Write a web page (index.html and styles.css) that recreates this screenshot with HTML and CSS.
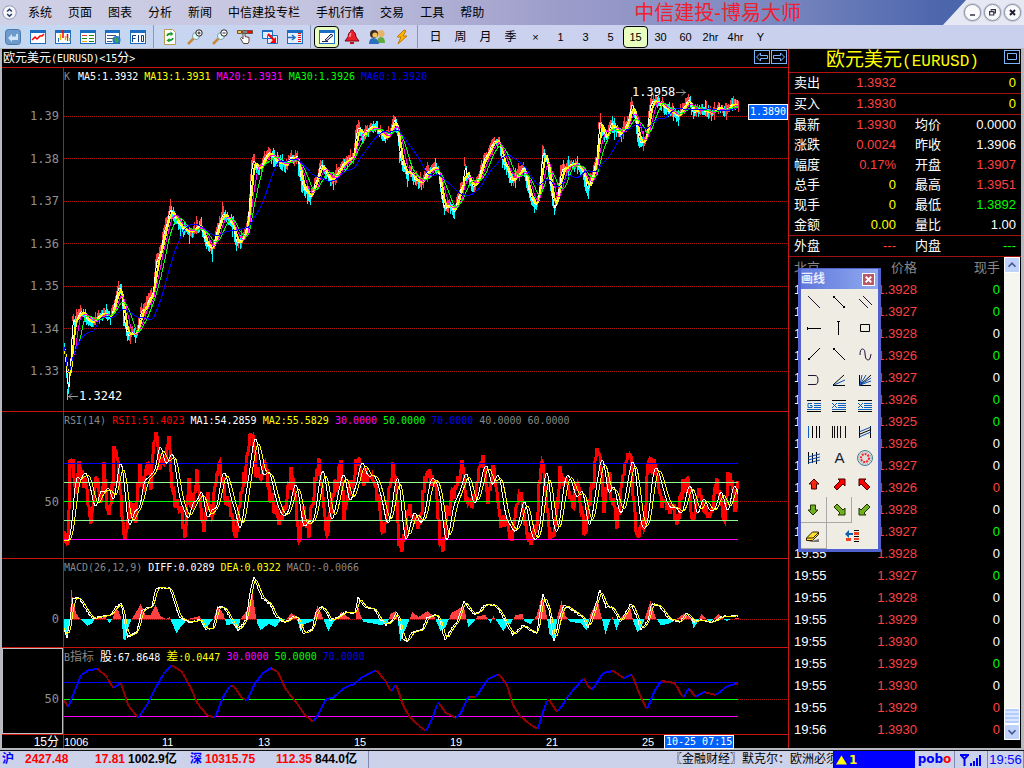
FILE: index.html
```html
<!DOCTYPE html>
<html lang="zh-CN">
<head>
    <meta charset="UTF-8">
    <title>中信建投-博易大师</title>
    <link rel="stylesheet" href="styles.css">
    <script src="charts.js" defer></script>
</head>
<body>
<header class="titlebar">
    <svg class="logo" viewBox="0 0 16 16"><circle cx="8" cy="8" r="7.2" fill="#f4f4fa" stroke="#8a94b0"/><path d="M5.500 7L8 4.500 10.500 7M5.500 9.500L8 12l2.500-2.500" fill="none" stroke="#223a66" stroke-width="1.500"/></svg>
    <nav class="menu">
        <a href="#">系统</a><a href="#">页面</a><a href="#">图表</a><a href="#">分析</a><a href="#">新闻</a><a href="#">中信建投专栏</a><a href="#">手机行情</a><a href="#">交易</a><a href="#">工具</a><a href="#">帮助</a>
    </nav>
    <h1>中信建投-博易大师</h1>
    <div class="win-btns">
        <button aria-label="最小化"><svg viewBox="0 0 18 18"><path d="M6 12h6" stroke="#334" stroke-width="2"/></svg></button>
        <button aria-label="还原"><svg viewBox="0 0 18 18"><path d="M7.500 7V5.500h5v4H11M5.500 8h5v4h-5z" fill="none" stroke="#334" stroke-width="1.400"/></svg></button>
        <button aria-label="关闭"><svg viewBox="0 0 18 18"><path d="M6 6l6 6M12 6l-6 6" stroke="#223" stroke-width="2.400"/></svg></button>
    </div>
</header>

<div class="toolbar">
    <div class="group">
        <button aria-label="返回"><svg viewBox="0 0 16 16"><rect x=".5" y=".5" width="15" height="15" rx="3" fill="#6d9ccc" stroke="#4a78ac"/><path d="M3 9l4-4v2.500h4V5h2v6H7v2z" fill="#cfe4f8"/></svg></button>
        <button aria-label="分时"><svg viewBox="0 0 16 16"><rect x=".5" y="1.500" width="15" height="13" fill="#fff" stroke="#1a6fc4"/><path d="M0 2.500h16" stroke="#1a6fc4" stroke-width="3"/><path d="M2 11l3-3 2 2 3-3h2l2-2" fill="none" stroke="red" stroke-width="1.500"/></svg></button>
        <button aria-label="K线"><svg viewBox="0 0 16 16"><rect x=".5" y="1.500" width="15" height="13" fill="#fff" stroke="#1a6fc4"/><path d="M0 2.500h16" stroke="#1a6fc4" stroke-width="3"/><path d="M3.500 9v4M12.500 8v4" stroke="#1a6fc4"/><path d="M5.500 5v6M10.500 7v4M14.500 9v3" stroke="#e8b000" stroke-width="1.500"/><path d="M8 1v8M12.500 5v4" stroke="red" stroke-width="1.500"/></svg></button>
        <button aria-label="报价"><svg viewBox="0 0 16 16"><rect x=".5" y="1.500" width="15" height="13" fill="#fff" stroke="#1a6fc4"/><path d="M0 2.500h16" stroke="#1a6fc4" stroke-width="3"/><path d="M2 6.500h5" stroke="#e33"/><path d="M2 9.500h5M9 6.500h5M9 9.500h5M9 12.500h5" stroke="#281"/><path d="M2 12.500h5" stroke="#e8b000"/></svg></button>
        <button aria-label="新闻"><svg viewBox="0 0 16 16"><rect x=".5" y="1.500" width="14" height="13" fill="#fff" stroke="#1a6fc4"/><path d="M0 2.500h15" stroke="#1a6fc4" stroke-width="3"/><path d="M2 6.500h9M2 9.500h6M2 12.500h5" stroke="#457"/><circle cx="11.500" cy="11" r="4" fill="#1c78c8"/><path d="M9 10q2-3 4 0t-2 4z" fill="#3fa54a"/></svg></button>
        <button aria-label="F10"><svg viewBox="0 0 16 16"><rect x=".5" y="1.500" width="15" height="13" fill="#fff" stroke="#1a6fc4"/><path d="M0 2.500h16" stroke="#1a6fc4" stroke-width="3"/><path d="M2.500 13V6.500H6M2.500 9.500h3M8.500 6v7M11.500 6.500h2v6h-2z" fill="none" stroke="#123b80"/></svg></button>
    </div>
    <div class="group">
        <button aria-label="刷新"><svg viewBox="0 0 16 16"><path d="M2.500.5h8l3 3v12h-11z" fill="#fff" stroke="#b99a4a"/><path d="M5 7q1-3 4-2M11 9q-1 3-4 2" fill="none" stroke="#1a9a2a" stroke-width="1.800"/><path d="M8.500 2.500l3 2.500-3 2zM7.500 9l-3 2.500 3 2z" fill="#1a9a2a"/></svg></button>
        <button aria-label="放大"><svg viewBox="0 0 16 16"><path d="M1 15l6-6" stroke="#c88a3a" stroke-width="2.500"/><circle cx="9" cy="7" r="3.500" fill="#dff" stroke="#89a"/><circle cx="12" cy="4" r="3.200" fill="#fff" stroke="#222"/><path d="M10.500 4h3M12 2.500v3" stroke="#222"/></svg></button>
        <button aria-label="缩小"><svg viewBox="0 0 16 16"><path d="M1 15l6-6" stroke="#c88a3a" stroke-width="2.500"/><circle cx="9" cy="7" r="3.500" fill="#dff" stroke="#89a"/><circle cx="12" cy="4" r="3.200" fill="#fff" stroke="#222"/><path d="M10.500 4h3" stroke="#222"/></svg></button>
        <button aria-label="选择"><svg viewBox="0 0 16 16"><path d="M.5 1.500h4v3h-4z" fill="#ffc040" stroke="#654"/><path d="M5.500 1.500h5v3h-5z" fill="#888" stroke="#654"/><path d="M10.500 1.500h5v3h-5z" fill="red" stroke="#654"/><path d="M6.500 14.500l-3-5 1-1 1.500 1.500V4.500q1-1 2 0v3l4 1v4l-1 2z" fill="#fff" stroke="#543"/></svg></button>
        <button aria-label="叠加"><svg viewBox="0 0 16 16"><path d="M.5 1.500h10v8H.5zM5.500 6.500h10v8h-10z" fill="#e4eefc" stroke="#1a6fc4"/><path d="M.5 2h10" stroke="#1a6fc4" stroke-width="2"/><path d="M6 5l6 6" stroke="red" stroke-width="2"/><path d="M14 8v6H8z" fill="red"/></svg></button>
        <button aria-label="移动"><svg viewBox="0 0 16 16"><rect x=".5" y="1.500" width="15" height="13" fill="#e4eefc" stroke="#1a6fc4"/><path d="M0 2.500h16" stroke="#1a6fc4" stroke-width="3"/><path d="M1 8.500h6M5 6l3 2.500L5 11" fill="none" stroke="#1a6fc4" stroke-width="1.500"/><path d="M12.500 4v10" stroke="red" stroke-width="3" stroke-dasharray="1 1"/></svg></button>
    </div>
    <div class="group">
        <button class="on" aria-label="画线"><svg viewBox="0 0 16 16"><rect x=".5" y="1.500" width="15" height="13" fill="#fff" stroke="#1a6fc4"/><path d="M0 2.500h16" stroke="#1a6fc4" stroke-width="3"/><path d="M3 12.500h6M6 11l6-6 2 1.500-6 5z" fill="#dde" stroke="#225"/></svg></button>
        <button aria-label="预警"><svg viewBox="0 0 16 16"><path d="M8 1q1.500 0 1.500 1.500Q12 4 12 8l3 4H1l3-4q0-4 2.500-5.500Q6.500 1 8 1z" fill="#e8202a" stroke="#801"/><path d="M5.500 5q1-2 2-1l-1 4h-2z" fill="#ff9090"/><path d="M6 13h4v2H6z" fill="#b01018"/></svg></button>
        <button aria-label="用户"><svg viewBox="0 0 16 16"><path d="M8 14q0-6 4-6t4 6z" fill="#5dab3c"/><circle cx="12" cy="4.500" r="3.500" fill="#e8b468"/><path d="M0 15q0-6 4.500-6T10 15z" fill="#2a6fc0"/><circle cx="5" cy="5" r="4" fill="#3a2a1a"/><circle cx="6" cy="6" r="2.600" fill="#f0c060"/></svg></button>
        <button aria-label="闪电"><svg viewBox="0 0 16 16"><path d="M10 1L3 8h4l-3 7 9-8H9l3-5z" fill="#ffb400" stroke="#c07800"/></svg></button>
    </div>
    <div class="group periods">
        <button class="cjk">日</button><button class="cjk">周</button><button class="cjk">月</button><button class="cjk">季</button><button>×</button><button>1</button><button>3</button><button>5</button><button class="on">15</button><button>30</button><button>60</button><button>2hr</button><button>4hr</button><button>Y</button>
    </div>
</div>

<main class="main">
    <section class="charts">
        <div class="chart-head">
            <h2>欧元美元<span class="mono">(EURUSD)&lt;15</span>分<span class="mono">&gt;</span></h2>
            <button aria-label="上一个"><svg viewBox="0 0 14 12"><path d="M1.500 6l4-4v2.500h7v3h-7V10z" fill="none" stroke="#7ab4ff"/></svg></button>
            <button aria-label="下一个"><svg viewBox="0 0 14 12"><path d="M12.500 6l-4-4v2.500h-7v3h7V10z" fill="none" stroke="#7ab4ff"/></svg></button>
        </div>
        <div class="pane">
            <div class="axis axis-price"><span>1.39</span><span>1.38</span><span>1.37</span><span>1.36</span><span>1.35</span><span>1.34</span><span>1.33</span></div>
            <div class="plot">
                <svg id="price" viewBox="64 68 724 343" preserveAspectRatio="none"></svg>
                <p class="legend"><span class="gray">K</span><span class="white gap">MA5:1.3932</span><span class="yellow">MA13:1.3931</span><span class="magenta">MA20:1.3931</span><span class="lime">MA30:1.3926</span><span class="blue">MA60:1.3920</span></p>
                <span class="mark high">1.3958<svg viewBox="0 0 12 8"><path d="M1 4.500h10M7 1.500l3 3-3 3" fill="none" stroke="#999"/></svg></span>
                <span class="mark low"><svg viewBox="0 0 12 8"><path d="M1 4.500h10M5 1.500l-3 3 3 3" fill="none" stroke="#999"/></svg>1.3242</span>
                <span class="price-tag">1.3890</span>
            </div>
        </div>
        <div class="pane">
            <div class="axis axis-rsi"><span>50</span></div>
            <div class="plot">
                <svg id="rsi" viewBox="64 412 724 146" preserveAspectRatio="none"></svg>
                <p class="legend"><span class="gray">RSI(14)</span><span class="red">RSI1:51.4023</span><span class="white">MA1:54.2859</span><span class="yellow">MA2:55.5829</span><span class="magenta">30.0000</span><span class="lime">50.0000</span><span class="blue">70.0000</span><span class="gray">40.0000</span><span class="gray">60.0000</span></p>
            </div>
        </div>
        <div class="pane">
            <div class="axis axis-macd"><span>0</span></div>
            <div class="plot">
                <svg id="macd" viewBox="64 559 724 88" preserveAspectRatio="none"></svg>
                <p class="legend"><span class="gray">MACD(26,12,9)</span><span class="white">DIFF:0.0289</span><span class="yellow">DEA:0.0322</span><span class="gray">MACD:-0.0066</span></p>
            </div>
        </div>
        <div class="pane">
            <div class="axis axis-b"><span>50</span></div>
            <div class="plot">
                <svg id="bline" viewBox="64 648 724 86" preserveAspectRatio="none"></svg>
                <p class="legend"><span class="gray">B<b>指标</b></span><span class="white"><b>股</b>:67.8648</span><span class="yellow"><b>差</b>:0.0447</span><span class="magenta">30.0000</span><span class="lime">50.0000</span><span class="blue">70.0000</span></p>
            </div>
        </div>
        <div class="pane time-row">
            <div class="axis">15分</div>
            <div class="times"><span>1006</span><span>11</span><span>13</span><span>15</span><span>19</span><span>21</span><span>25</span><strong class="time-tag">10-25 07:15</strong></div>
        </div>
    </section>

    <aside class="side">
        <div class="side-head">
            <h2>欧元美元<span>(EURUSD)</span></h2>
            <button aria-label="最大化"><svg viewBox="0 0 14 12"><path d="M2.500 2.500h9v6h-9z" fill="none" stroke="#7ab4ff"/></svg></button>
        </div>
        <table class="quote">
            <tr class="line"><th>卖出</th><td class="up">1.3932</td><th></th><td class="yellow">0</td></tr>
            <tr class="line"><th>买入</th><td class="up">1.3930</td><th></th><td class="yellow">0</td></tr>
            <tr><th>最新</th><td class="up">1.3930</td><th>均价</th><td>0.0000</td></tr>
            <tr><th>涨跌</th><td class="up">0.0024</td><th>昨收</th><td>1.3906</td></tr>
            <tr><th>幅度</th><td class="up">0.17%</td><th>开盘</th><td class="up">1.3907</td></tr>
            <tr><th>总手</th><td class="yellow">0</td><th>最高</th><td class="up">1.3951</td></tr>
            <tr><th>现手</th><td class="yellow">0</td><th>最低</th><td class="lime">1.3892</td></tr>
            <tr class="line"><th>金额</th><td class="yellow">0.00</td><th>量比</th><td>1.00</td></tr>
            <tr class="line"><th>外盘</th><td class="up">---</td><th>内盘</th><td class="lime">---</td></tr>
        </table>
        <div class="ticks-wrap">
            <table class="ticks">
                <thead><tr><th>北京</th><th>价格</th><th>现手</th></tr></thead>
                <tbody>
                <tr><td>19:55</td><td>1.3928</td><td class="lime">0</td></tr>
                <tr><td>19:55</td><td>1.3927</td><td class="lime">0</td></tr>
                <tr><td>19:55</td><td>1.3928</td><td>0</td></tr>
                <tr><td>19:55</td><td>1.3926</td><td class="lime">0</td></tr>
                <tr><td>19:55</td><td>1.3927</td><td>0</td></tr>
                <tr><td>19:55</td><td>1.3926</td><td class="lime">0</td></tr>
                <tr><td>19:55</td><td>1.3925</td><td class="lime">0</td></tr>
                <tr><td>19:55</td><td>1.3926</td><td>0</td></tr>
                <tr><td>19:55</td><td>1.3927</td><td>0</td></tr>
                <tr><td>19:55</td><td>1.3926</td><td class="up">0</td></tr>
                <tr><td>19:55</td><td>1.3928</td><td>0</td></tr>
                <tr><td>19:55</td><td>1.3927</td><td class="lime">0</td></tr>
                <tr><td>19:55</td><td>1.3928</td><td>0</td></tr>
                <tr><td>19:55</td><td>1.3927</td><td class="lime">0</td></tr>
                <tr><td>19:55</td><td>1.3928</td><td>0</td></tr>
                <tr><td>19:55</td><td>1.3929</td><td>0</td></tr>
                <tr><td>19:55</td><td>1.3930</td><td>0</td></tr>
                <tr><td>19:55</td><td>1.3929</td><td class="lime">0</td></tr>
                <tr><td>19:55</td><td>1.3930</td><td>0</td></tr>
                <tr><td>19:55</td><td>1.3929</td><td class="up">0</td></tr>
                <tr><td>19:56</td><td>1.3930</td><td class="up">0</td></tr>
                </tbody>
            </table>
            <div class="scrollbar">
                <button aria-label="向上"><svg viewBox="0 0 16 16"><path d="M4 10l4-4 4 4" fill="none" stroke="#445a90" stroke-width="2"/></svg></button>
                <div class="track"><div class="thumb"></div></div>
                <button aria-label="向下"><svg viewBox="0 0 16 16"><path d="M4 6l4 4 4-4" fill="none" stroke="#445a90" stroke-width="2"/></svg></button>
            </div>
        </div>

        <div class="palette">
            <div class="palette-head">画线<button aria-label="关闭画线"><svg viewBox="0 0 12 12"><path d="M3 3l6 6M9 3L3 9" stroke="#fff" stroke-width="2"/></svg></button></div>
            <div class="tools">
                <button aria-label="直线"><svg viewBox="0 0 16 16"><path d="M2 2l12 12" stroke="#213"/></svg></button>
                <button aria-label="线段"><svg viewBox="0 0 16 16"><path d="M3 3l10 10" stroke="#000"/><path d="M2 2h2v2H2zM12 12h2v2h-2z"/></svg></button>
                <button aria-label="平行线"><svg viewBox="0 0 16 16"><path d="M2 5l9 9M6 2l9 9" stroke="#213"/></svg></button>
                <button aria-label="水平线"><svg viewBox="0 0 16 16"><path d="M1 8.500h14M1.500 7v3" stroke="#000"/></svg></button>
                <button aria-label="垂直线"><svg viewBox="0 0 16 16"><path d="M7.500 1v14M6 1.500h3" stroke="#000"/></svg></button>
                <button aria-label="矩形"><svg viewBox="0 0 16 16"><path d="M3.500 4.500h9v7h-9z" fill="none" stroke="#000"/></svg></button>
                <button aria-label="射线"><svg viewBox="0 0 16 16"><path d="M3 13L14 2" stroke="#000"/><path d="M2 12h2v2H2z"/></svg></button>
                <button aria-label="下射线"><svg viewBox="0 0 16 16"><path d="M3 3l11 11" stroke="#000"/><path d="M2 2h2v2H2z"/></svg></button>
                <button aria-label="波浪"><svg viewBox="0 0 16 16"><path d="M3 9q0-6 2.500-6T8 8t2.500 6T14 8" fill="none" stroke="#213"/></svg></button>
                <button aria-label="弧线"><svg viewBox="0 0 16 16"><path d="M2 3.500h7q3 0 3 4.500t-3 4.500H2" fill="none" stroke="#213"/></svg></button>
                <button aria-label="角度线"><svg viewBox="0 0 16 16"><path d="M2 13.500h12M2 13L13 3" stroke="#000"/><path d="M3 13l11-5" stroke="#0a50b0"/></svg></button>
                <button aria-label="甘氏线"><svg viewBox="0 0 16 16"><path d="M2.500 3v10.500H14M3 13L14 3" fill="none" stroke="#000"/><path d="M3 13L5 3M3 13L9 3M3 13l11-7M3 13l11-4" stroke="#0a50b0"/></svg></button>
                <button aria-label="黄金分割"><svg viewBox="0 0 16 16"><path d="M1 2.500h14M1 13.500h14" stroke="#000"/><path d="M8 5.500h7M8 7.500h7M8 9.500h7M1 11.500h14M6 5.500H2v4h4v-2H4" fill="none" stroke="#0a60c0"/></svg></button>
                <button aria-label="百分比"><svg viewBox="0 0 16 16"><path d="M1 2.500h14M1 13.500h14" stroke="#000"/><path d="M7 5.500h8M7 7.500h8M7 9.500h8M1 11.500h14M1 5l5 5M6 5l-5 5" stroke="#0a60c0"/></svg></button>
                <button aria-label="百分比二"><svg viewBox="0 0 16 16"><path d="M1 2.500h14M1 13.500h14" stroke="#000"/><path d="M7 5.500h8M7 7.500h8M7 9.500h8M1 11.500h14M1 5l5 5M6 5l-5 5" stroke="#0a60c0"/></svg></button>
                <button aria-label="周期线"><svg viewBox="0 0 16 16"><path d="M2.500 2v12" stroke="#0a60c0"/><path d="M6.500 2v12M10.500 2v12M13.500 2v12" stroke="#000"/></svg></button>
                <button aria-label="斐波那契"><svg viewBox="0 0 16 16"><path d="M1.500 2v12M3.500 2v12M6.500 2v12M9.500 2v12M14.500 2v12" stroke="#111"/></svg></button>
                <button aria-label="通道线"><svg viewBox="0 0 16 16"><path d="M2.500 2v12M13.500 2v12" stroke="#000"/><path d="M2 8l12-5M2 13l12-5" stroke="#0a50b0"/><path d="M2 10.500l12-5" stroke="#000"/></svg></button>
                <button aria-label="回归线"><svg viewBox="0 0 16 16"><path d="M2.500 2v12M6.500 3v10M10.500 2v12" stroke="#000"/><path d="M2 7l12-3M2 10l12-3M2 13l12-3" stroke="#0a50b0"/></svg></button>
                <button class="letter">A</button>
                <button aria-label="圆"><svg viewBox="0 0 16 16"><circle cx="8" cy="8" r="7.500" fill="#e4ecec" stroke="#447888"/><circle cx="8" cy="8" r="6" fill="none" stroke="#889" stroke-dasharray="1 1"/><circle cx="8" cy="8" r="4" fill="#ddd" stroke="#e22" stroke-width="2" stroke-dasharray="2 1"/></svg></button>
                <button aria-label="上箭头"><svg viewBox="0 0 16 16"><path d="M8 3l5 5h-2.500v5h-5V8H3z" fill="#f42a10" stroke="#400"/></svg></button>
                <button aria-label="右上箭头"><svg viewBox="0 0 16 16"><path d="M7 3h7v7l-2-2-6 6-3-3 6-6z" fill="red" stroke="#400"/></svg></button>
                <button aria-label="左上箭头"><svg viewBox="0 0 16 16"><path d="M9 3H2v7l2-2 6 6 3-3-6-6z" fill="red" stroke="#400"/></svg></button>
                <button class="boxed" aria-label="下箭头"><svg viewBox="0 0 16 16"><path d="M8 13l5-5h-2.500V3h-5v5H3z" fill="#70b020" stroke="#230"/></svg></button>
                <button class="boxed" aria-label="右下箭头"><svg viewBox="0 0 16 16"><path d="M7 13h7V6l-2 2-6-6-3 3 6 6z" fill="#70b020" stroke="#230"/></svg></button>
                <button aria-label="左下箭头"><svg viewBox="0 0 16 16"><path d="M9 13H2V6l2 2 6-6 3 3-6 6z" fill="#70b020" stroke="#230"/></svg></button>
                <button class="boxed" aria-label="橡皮"><svg viewBox="0 0 16 16"><path d="M3 14h11v-3z" fill="#777"/><path d="M1.500 10l6-6h6v2.500l-6 6h-6z" fill="#ffe030" stroke="#320"/><path d="M2 10h6l5-5" fill="none" stroke="#320"/></svg></button>
                <button class="wide" aria-label="画线管理"><svg viewBox="0 0 16 16"><path d="M1 6l4-4v3h4v2H5v3z" fill="#1060b0"/><path d="M2 10h5v3H2zM10 4h5v3h-5zM10 10h5v2h-5z" fill="#f04020"/><path d="M10 2.500h5M10 8.500h5M10 13.500h5" stroke="#000"/></svg></button>
            </div>
        </div>
    </aside>
</main>

<footer class="status">
    <div class="indices">
        <span class="idx">沪</span><span class="red">2427.48</span><span class="red">17.81</span><span>1002.9亿</span>
        <span class="idx">深</span><span class="red">10315.75</span><span class="red">112.35</span><span>844.0亿</span>
    </div>
    <p class="news">〖金融财经〗默克尔：欧洲必须</p>
    <div class="alert"><svg viewBox="0 0 12 10"><path d="M6 0l6 10H0z" fill="#ff0"/></svg>1</div>
    <div class="cell brand">pob<span class="red">o</span></div>
    <div class="cell signal"><svg viewBox="0 0 24 13"><path d="M1 2h9M2 2l3.500 4L9 2M5.500 6v7" fill="none" stroke="#00f" stroke-width="2"/><path d="M12 10v3M15 8v5M18 5v8M21 2v11" stroke="#00f" stroke-width="2"/></svg></div>
    <div class="cell clock">19:56</div>
</footer>
</body>
</html>
```
FILE: styles.css
```css
* {
    margin: 0;
    padding: 0;
    box-sizing: border-box;
}
body {
    height: 100vh;
    display: flex;
    flex-direction: column;
    overflow: hidden;
    background: #000;
    color: #fff;
    font: 12px/16px "Liberation Sans", "Noto Sans CJK SC", sans-serif;
}
button {
    border: 0;
    background: none;
    font: inherit;
    color: inherit;
}
svg { display: block; }
h1, h2, th, b { font-weight: normal; }
a { color: inherit; text-decoration: none; }

.red { color: #f00; }
.up { color: #ff4040; }
.yellow { color: #ff0; }
.magenta { color: #f0f; }
.lime { color: #0f0; }
.blue { color: #00f; }
.gray { color: #888; }
.white { color: #fff; }
.mono { font: 10px "DejaVu Sans Mono", monospace; }

/* title bar */
.titlebar {
    flex: 0 0 25px;
    display: flex;
    align-items: center;
    padding-left: 2px;
    background: linear-gradient(90deg, #d0d0e6 0%, #c4c4e0 30%, #9c9cca 55%, #7c88c0 75%, #4c66ac 92%);
    color: #000;
}
.logo { width: 15px; height: 15px; margin-right: 11px; }
.menu { display: flex; gap: 16px; }
.titlebar h1 {
    margin: 0 142px 0 auto;
    font-size: 20px;
    line-height: 24px;
    color: #f02030;
}
.win-btns {
    align-self: stretch;
    display: flex;
    align-items: center;
    justify-content: flex-end;
    gap: 3px;
    width: 81px;
    padding-right: 3px;
    background: #e6e8f4;
    clip-path: polygon(23px 0, 100% 0, 100% 100%, 0 100%);
}
.win-btns button {
    width: 17px;
    height: 17px;
    border: 1px solid #8890a8;
    border-radius: 50%;
    background: #fafafc;
    box-shadow: 0 0 0 1px #c8c8d0;
}
.win-btns svg { width: 15px; height: 15px; }

/* toolbar */
.toolbar {
    flex: 0 0 23px;
    display: flex;
    background: linear-gradient(90deg, #c4d8f2, #ccd2ee 40%, #c8d0ee);
    color: #000;
}
.group { display: flex; align-items: center; }
.group + .group {
    margin-left: 3px;
    padding-left: 3px;
    border-left: 1px solid #8898b8;
}
.group.periods { padding-left: 5px; }
.group button {
    width: 25px;
    height: 22px;
    display: flex;
    align-items: center;
    justify-content: center;
    border-radius: 4px;
    white-space: nowrap;
    font-size: 11px;
}
.group svg { width: 16px; height: 16px; }
.group .cjk { font-size: 12px; }
.group .on { border: 1px solid #000; background: #e8ffc0; }

/* main */
.main {
    flex: 1;
    min-height: 0;
    display: flex;
    border: solid #b8b8c0;
    border-width: 1px 3px 2px 2px;
}
.charts {
    flex: 1;
    min-width: 0;
    display: grid;
    grid-template-rows: 18px 344fr 147fr 89fr 87fr 14px;
}
.chart-head { display: flex; gap: 1px; padding-right: 1px; }
.chart-head h2 { flex: 1; padding-left: 1px; font-size: 12px; line-height: 18px; }
.chart-head button, .side-head button {
    width: 16px;
    height: 14px;
    margin-top: 1px;
    border: 1px solid #7ab4ff;
}
.pane {
    min-height: 0;
    display: flex;
    border-top: 1px solid #c81410;
}
.axis {
    flex: 0 0 62px;
    display: flex;
    flex-direction: column;
    padding-right: 4px;
    border-right: 1px solid #c81410;
    color: #909090;
    font: 12px/16px "DejaVu Sans Mono", "Noto Sans CJK SC", monospace;
    text-align: right;
}
.axis-price { justify-content: space-between; padding-top: 40px; padding-bottom: 32px; }
.axis-rsi { padding-top: 82px; }
.axis-macd { padding-top: 52px; }
.axis-b { padding-top: 43px; box-shadow: inset 0 0 0 1px #c0c0c0; }
.plot { flex: 1; min-width: 0; position: relative; }
.plot > svg { position: absolute; width: 100%; height: 100%; shape-rendering: crispEdges; }
.legend {
    position: absolute;
    top: 0;
    left: 0;
    display: flex;
    gap: 6px;
    font: 10px/18px "DejaVu Sans Mono", "Noto Sans CJK SC", monospace;
}
.legend b { font-size: 12px; }
.legend .gap { margin-left: 2px; }
.mark {
    position: absolute;
    display: flex;
    align-items: center;
    font: 12px/16px "DejaVu Sans Mono", monospace;
}
.mark svg { width: 12px; height: 8px; }
.high { left: 568px; top: 16px; }
.low { left: 3px; top: 320px; }
.price-tag, .time-tag {
    border: 1px solid #fff;
    background: #0060f8;
    color: #fff;
    font: 10px/14px "DejaVu Sans Mono", monospace;
}
.price-tag { position: absolute; right: 0; top: 36px; padding: 0 1px; }
.time-row .axis { color: #fff; font: 12px/14px "Liberation Sans", "Noto Sans CJK SC", sans-serif; }
.times {
    flex: 1;
    display: grid;
    grid-template-columns: 98px repeat(5, 96px) 22px 1fr;
    line-height: 14px;
    font-size: 11px;
}
.time-tag { justify-self: start; line-height: 12px; padding: 0 1px; }

/* right column */
.side {
    flex: 0 0 233px;
    position: relative;
    display: flex;
    flex-direction: column;
    border-left: 1px solid #c81410;
}
.side-head { display: flex; height: 24px; padding-right: 1px; border-bottom: 1px solid #b01010; }
.side-head h2 {
    flex: 1;
    padding-left: 12px;
    text-align: center;
    font-size: 19px;
    line-height: 22px;
    color: #ff0;
}
.side-head h2 span { font: 16px "Liberation Mono", monospace; }
.quote, .ticks {
    width: 100%;
    border-collapse: separate;
    border-spacing: 0;
    table-layout: fixed;
    font-size: 13px;
    line-height: 18px;
}
.quote th { width: 46px; height: 20px; padding-left: 5px; text-align: left; }
.quote td { width: 61px; text-align: right; }
.quote th + td + th { width: 64px; padding-left: 19px; }
.quote td:last-child { width: auto; padding-right: 5px; }
.quote .line th, .quote .line td { height: 21px; border-bottom: 1px solid #a01010; }
.ticks-wrap { flex: 1; min-height: 0; display: flex; }
.ticks { align-self: flex-start; flex: 1; }
.ticks th { color: #888; }
.ticks th, .ticks td { height: 22px; text-align: right; padding-right: 4px; }
.ticks th:first-child, .ticks td:first-child { width: 60px; text-align: left; padding: 0 0 0 5px; }
.ticks th:nth-child(2), .ticks td:nth-child(2) { width: 68px; padding: 0; }
.ticks td:nth-child(2) { color: #ff4040; }
.scrollbar {
    flex: 0 0 16px;
    display: flex;
    flex-direction: column;
    margin: 0 1px 8px 0;
    background: #f6f6f0;
}
.scrollbar button, .thumb {
    width: 16px;
    height: 16px;
    border: 1px solid #fff;
    border-radius: 2px;
    background: #c0d2fa;
}
.scrollbar svg { width: 14px; height: 14px; }
.track { flex: 1; display: flex; align-items: flex-end; }
.thumb { background: repeating-linear-gradient(#b4ccfa 0 2px, #d8e6ff 2px 4px); }

/* floating drawing tools */
.palette {
    position: absolute;
    left: 9px;
    top: 219px;
    width: 83px;
    border: 3px solid #5060cc;
    border-top-width: 1px;
    background: #efece4;
}
.palette-head {
    height: 20px;
    display: flex;
    align-items: center;
    justify-content: space-between;
    padding-right: 3px;
    background: linear-gradient(90deg, #6078dc, #90aaf0);
    color: #e8ecff;
    font-weight: bold;
}
.palette-head button { width: 13px; height: 13px; border: 1px solid #fff; background: #b85868; }
.palette-head svg { width: 11px; height: 11px; }
.tools { display: grid; grid-template-columns: repeat(3, 1fr); grid-auto-rows: 26px; }
.tools button { display: flex; align-items: center; justify-content: center; }
.tools svg { width: 16px; height: 16px; }
.tools .boxed { border: solid #a8a8a8; border-width: 0 1px 1px 0; }
.tools .wide { grid-column: span 2; }
.tools .letter { font-size: 15px; color: #123; }

/* status bar */
.status {
    flex: 0 0 18px;
    display: flex;
    background: #ccd2ea;
    border-top: 1px solid #111;
    color: #000;
    line-height: 17px;
}
.indices {
    flex: 0 0 369px;
    display: grid;
    grid-template-columns: 23px 66px 34px 65px 15px 54px 53px 1fr;
    font-weight: bold;
    white-space: nowrap;
    padding-left: 2px;
    border-right: 1px solid #8088b0;
}
.indices span:nth-child(3), .indices span:nth-child(7) { text-align: right; }
.indices span:nth-child(4), .indices span:nth-child(8) { padding-left: 3px; }
.indices .idx { color: #00f; }
.news { flex: 0 0 163px; margin-left: auto; overflow: hidden; white-space: nowrap; }
.alert {
    flex: 0 0 82px;
    display: flex;
    align-items: center;
    gap: 2px;
    padding-left: 3px;
    background: #00f;
    color: #ff0;
    font: bold 12px "DejaVu Sans", sans-serif;
}
.alert svg { width: 11px; height: 10px; }
.cell { border-right: 1px solid #8088b0; text-align: center; color: #00f; }
.brand { flex: 0 0 40px; font: bold 12px/16px "DejaVu Sans", sans-serif; }
.signal { flex: 0 0 33px; padding: 2px 4px; }
.signal svg { width: 24px; height: 13px; }
.clock { flex: 0 0 36px; font-size: 13px; }
```
FILE: charts.js
```js
const X0 = 64, X1 = 738, XR = 788;

const price = [63,346,65,352,67,392,69,380,71,340,72,320,75,322,79,312,82,313,86,318,92,323,97,317,104,312,110,319,115,300,118,287,121,292,123,318,127,335,132,333,136,336,140,312,145,308,150,297,153,290,155,265,157,258,160,252,163,235,166,225,169,210,172,214,176,222,182,228,188,233,196,228,200,224,203,235,206,245,212,250,216,230,222,214,227,218,233,228,236,245,241,240,245,232,248,215,251,165,253,158,256,170,260,168,264,158,268,152,274,160,284,166,290,158,297,157,300,178,304,190,310,198,316,180,320,165,324,170,330,182,336,175,342,164,347,160,353,157,356,130,358,126,362,137,370,126,376,128,381,134,385,140,390,130,394,118,397,128,399,155,402,165,407,175,410,170,415,180,421,185,425,175,433,166,438,172,441,195,444,210,449,205,454,213,458,195,463,183,464,160,466,175,473,188,478,178,483,160,488,152,494,140,499,142,502,162,507,170,511,182,517,176,523,166,528,190,533,203,536,207,540,180,542,150,546,158,549,180,554,212,558,190,561,170,567,167,573,163,580,168,584,175,587,190,592,175,597,155,598,124,600,122,604,135,607,138,610,122,615,130,620,136,626,126,629,117,631,102,634,112,638,140,642,143,646,135,649,110,651,102,655,101,661,105,670,112,678,116,684,106,688,98,693,113,700,109,706,112,712,114,718,107,725,111,732,104,737,105];

const rsi = [63,541,68,539,70,470,73,465,76,500,78,466,82,472,87,490,91,518,97,480,101,505,104,470,108,512,113,485,114,455,118,458,121,495,123,530,126,532,130,505,136,515,140,467,144,490,147,462,151,485,154,438,157,440,160,470,165,460,169,442,172,480,176,505,181,510,185,530,189,485,192,515,197,478,203,530,208,500,212,520,216,478,221,466,226,500,232,510,236,545,240,500,245,475,250,430,252,429,256,470,260,480,265,465,270,495,278,518,285,512,291,475,295,495,299,538,304,515,309,530,315,480,319,460,322,485,327,533,332,500,337,480,341,460,344,515,350,485,353,490,356,455,359,460,363,480,370,472,378,500,384,535,389,495,393,467,396,480,399,543,401,548,405,530,410,505,415,525,420,522,425,480,427,475,432,482,436,490,440,540,443,553,446,520,451,498,455,495,459,480,463,463,467,502,473,505,477,475,483,458,488,497,493,465,497,485,501,520,507,525,511,538,516,515,521,490,525,530,532,545,537,520,541,460,543,458,546,500,549,528,553,540,558,500,560,472,567,478,573,505,578,480,585,540,589,505,594,475,596,455,600,455,604,510,609,472,612,500,617,522,622,490,625,470,629,455,631,452,633,500,637,530,641,530,645,520,648,465,654,468,660,495,666,510,672,505,678,520,683,484,688,485,693,525,699,490,704,512,712,510,717,480,720,505,725,520,728,478,732,485,735,508,738,485];

const hist = [63,-10,67,-18,69,-5,71,29,73,15,76,5,80,0,87,-7,92,-4,94,0,105,2,109,-4,112,0,115,10,118,8,121,0,123,-20,125,-21,128,-8,131,0,134,4,140,15,145,4,150,4,155,14,160,3,165,0,169,2,172,-5,176,-14,181,-7,187,0,199,3,205,-11,210,-3,213,0,217,13,223,5,226,-6,232,-5,237,-11,240,0,246,8,252,26,255,5,257,-5,260,-11,268,-5,275,-8,280,-2,286,0,291,6,296,2,300,-12,304,-5,312,-2,317,13,321,5,324,-3,328,-12,333,-3,341,7,350,0,355,0,357,14,360,4,363,-3,370,-4,381,-6,387,-4,390,5,395,8,397,0,400,-22,405,-10,409,0,412,7,418,2,427,8,434,2,440,-12,445,-8,451,6,458,10,463,13,468,-8,473,-3,477,3,485,4,490,-4,493,3,499,-6,503,-12,507,-5,510,-5,515,4,522,5,524,-2,530,-5,536,3,542,25,546,4,549,-15,554,-21,557,3,561,18,565,3,570,-3,580,-4,586,-11,590,5,597,19,601,2,605,-15,609,-3,612,2,616,-11,621,2,630,10,633,-3,637,-13,641,-8,645,3,650,18,655,2,660,-6,668,-5,676,0,683,5,690,2,693,-9,697,-3,701,5,709,-3,713,0,718,5,722,1,726,-2,730,0,738,1];

const diff = [63,625,67,638,70,620,73,598,79,598,85,608,92,618,100,617,110,615,115,608,121,603,125,625,128,637,137,632,142,610,152,606,156,588,170,588,175,605,180,618,190,622,200,620,206,630,213,628,218,607,224,607,230,618,238,630,246,620,250,592,254,576,258,588,262,598,270,604,276,617,285,623,293,616,298,618,303,634,312,630,316,612,322,606,330,620,337,618,345,612,355,613,358,597,364,607,374,609,380,619,386,625,392,620,397,612,400,625,403,638,407,642,412,632,422,630,427,618,436,614,440,622,445,640,452,628,458,620,464,601,470,610,475,615,485,605,495,605,502,615,507,625,513,635,523,625,530,630,537,633,540,612,543,595,549,610,554,642,559,620,564,605,575,612,582,617,588,627,594,610,600,590,606,607,612,607,620,622,626,612,631,603,636,615,641,630,648,620,652,603,660,606,668,618,680,622,687,613,694,622,700,620,712,622,722,617,730,616,738,616];

const bline = [63,698,67,708,72,695,80,675,88,670,97,669,106,677,112,688,120,683,127,705,137,718,146,705,155,687,163,673,171,665,181,672,190,688,196,703,206,715,214,718,222,697,229,686,233,686,240,697,246,701,253,685,262,673,270,668,277,672,285,690,296,703,303,714,312,722,318,713,325,699,332,698,343,688,353,684,360,678,375,670,384,680,390,692,395,684,402,705,408,716,418,726,425,731,431,719,437,702,445,713,455,718,460,713,467,697,475,697,487,679,498,674,506,685,512,705,519,716,530,725,537,729,542,712,547,698,556,712,561,706,567,696,583,678,588,688,592,689,602,673,612,671,623,678,631,674,638,693,646,710,653,692,660,681,674,683,682,698,688,688,694,697,703,692,715,695,725,687,733,684,738,684];

let seed = 15;
function rnd() {
    seed = (seed * 16807) % 2147483647;
    return seed / 2147483647;
}

// one value for every column between X0 and X1
function sample(pts) {
    const out = [];
    let i = 0;
    for (let x = X0; x <= X1; x++) {
        while (i < pts.length - 4 && pts[i + 2] < x) i += 2;
        const t = Math.min(1, (x - pts[i]) / (pts[i + 2] - pts[i]));
        out.push(pts[i + 1] + (pts[i + 3] - pts[i + 1]) * t);
    }
    return out;
}

function average(list, n) {
    return list.map((v, i) => {
        const part = list.slice(Math.max(0, i - n + 1), i + 1);
        return part.reduce((a, b) => a + b, 0) / part.length;
    });
}

function path(d, color, width = 1, dash = '') {
    return `<path d="${d}" fill="none" stroke="${color}" stroke-width="${width}" stroke-dasharray="${dash}"/>`;
}

function line(list, color, width) {
    return path('M' + list.map((v, i) => `${X0 + i} ${v.toFixed(1)}`).join('L'), color, width);
}

function level(y, color, from = X0, to = X1, dash = '') {
    return path(`M${from} ${y + .5}H${to}`, color, 1, dash);
}

function drawPrice() {
    const list = sample(price).map(v => v + (rnd() - .5) * 4);
    let out = '', up = '', down = '';
    [116, 158, 201, 243, 286, 328, 371].forEach(y => out += level(y, '#b01010', X0, XR, '1 1'));
    list.forEach((v, i) => {
        const spike = rnd() > .8 ? 10 : 5;
        const bar = `M${X0 + i + .5} ${(v - 2 - rnd() * spike).toFixed(1)}V${(v + 2 + rnd() * spike).toFixed(1)}`;
        if (v < list[Math.max(0, i - 2)]) up += bar; else down += bar;
    });
    out += path(down, '#0ff') + path(up, '#ff4040');
    out += line(average(list, 3), '#fff', 1);
    out += line(average(list, 6), '#ff0', 2);
    out += line(average(list, 10), '#f0f', 1);
    out += line(average(list, 15), '#0f0', 1);
    out += line(average(list, 30), '#00f', 1);
    document.querySelector('#price').innerHTML = out;
}

function drawRsi() {
    const base = sample(rsi);
    const list = base.map(v => v + (rnd() - .5) * 18);
    let out = level(501, '#b01010', X1, XR, '1 1') + line(list, '#f00', 3);
    out += level(463, '#00f') + level(482, '#90ff90') + level(501, '#0f0') + level(520, '#90ff90') + level(539, '#f0f');
    const ma = average(average(base, 5), 6);
    out += line(ma, '#fff', 1) + line(average(ma, 7), '#ff0', 1);
    document.querySelector('#rsi').innerHTML = out;
}

function drawMacd() {
    let up = '', down = '';
    sample(hist).forEach((v, i) => {
        const bar = `M${X0 + i + .5} 619v${(-v).toFixed(1)}`;
        if (v > 0) up += bar; else down += bar;
    });
    const list = sample(diff).map(v => v + (rnd() - .5) * 2);
    document.querySelector('#macd').innerHTML = level(619, '#b01010', X0, XR, '1 1')
        + path(up, '#ff4040') + path(down, '#0ff')
        + line(list, '#fff', 1) + line(average(list, 5), '#ff0', 1);
}

function drawB() {
    const list = average(sample(bline), 3);
    let up = '', down = '';
    list.slice(1).forEach((v, i) => {
        const seg = `M${X0 + i} ${list[i].toFixed(1)}L${X0 + i + 1} ${v.toFixed(1)}`;
        if (v < list[i]) up += seg; else down += seg;
    });
    document.querySelector('#bline').innerHTML = level(699, '#b01010', X1, XR, '1 1')
        + level(682, '#00f') + level(699, '#0f0') + level(716, '#f0f')
        + path(down, '#900000', 2) + path(up, '#00f', 2);
}

drawPrice();
drawRsi();
drawMacd();
drawB();
```
